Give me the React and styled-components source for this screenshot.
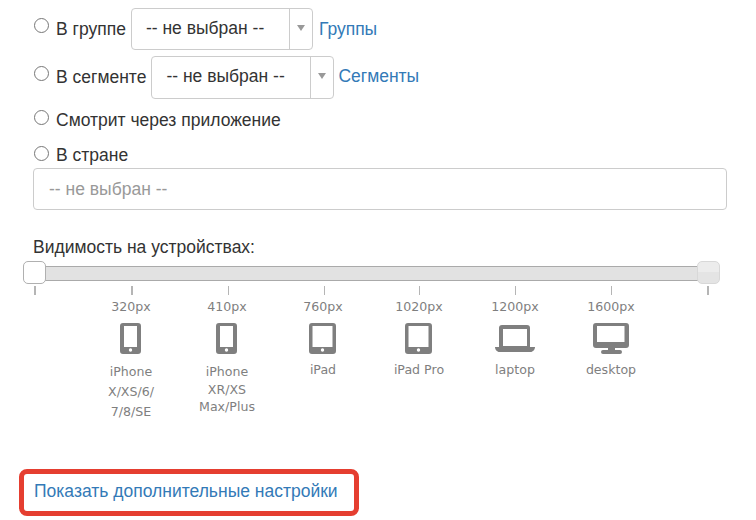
import React from 'react';
import styled, { createGlobalStyle } from 'styled-components';

const devices = [
  { px: '320px', icon: 'phone', slot: 22, lines: ['iPhone', 'X/XS/6/', '7/8/SE'], leading: 20, offset: 8 },
  { px: '410px', icon: 'phone', slot: 22, lines: ['iPhone', 'XR/XS', 'Max/Plus'], leading: 17.5, offset: 9 },
  { px: '760px', icon: 'tablet', slot: 28, lines: ['iPad'], leading: 18, offset: 7 },
  { px: '1020px', icon: 'tablet', slot: 28, lines: ['iPad Pro'], leading: 18, offset: 7 },
  { px: '1200px', icon: 'laptop', slot: 40, lines: ['laptop'], leading: 18, offset: 7 },
  { px: '1600px', icon: 'desktop', slot: 36, lines: ['desktop'], leading: 18, offset: 7 },
];

const ticks = [2, 2, 1, 1, 1, 1, 1, 2];

function DeviceIcon({ type }) {
  if (type === 'phone') {
    return (
      <svg width="21" height="31" viewBox="0 0 21 31">
        <path
          fillRule="evenodd"
          fill="#7f7f7f"
          d="M3 0h15a3 3 0 0 1 3 3v25a3 3 0 0 1-3 3H3a3 3 0 0 1-3-3V3a3 3 0 0 1 3-3zM4 3v21h13V3zM10.5 25.3a1.7 1.7 0 1 0 0 3.4 1.7 1.7 0 0 0 0-3.4z"
        />
      </svg>
    );
  }
  if (type === 'tablet') {
    return (
      <svg width="27" height="31" viewBox="0 0 27 31">
        <path
          fillRule="evenodd"
          fill="#7f7f7f"
          d="M3 0h21a3 3 0 0 1 3 3v25a3 3 0 0 1-3 3H3a3 3 0 0 1-3-3V3a3 3 0 0 1 3-3zM3.500 3v21h20V3zM13.500 25.300a1.700 1.700 0 1 0 0 3.400 1.700 1.700 0 0 0 0-3.400z"
        />
      </svg>
    );
  }
  if (type === 'laptop') {
    return (
      <svg width="40" height="27" viewBox="0 0 40 27">
        <path
          fillRule="evenodd"
          fill="#7f7f7f"
          d="M7 0h25a3 3 0 0 1 3 3v19h5c0 2.500-2 5-4.500 5h-31C2 27 0 24.500 0 22h4V3a3 3 0 0 1 3-3zM8 4v17h24V4z"
        />
      </svg>
    );
  }
  return (
    <svg width="36" height="31" viewBox="0 0 36 31">
      <path
        fillRule="evenodd"
        fill="#7f7f7f"
        d="M3 0h30a3 3 0 0 1 3 3v19a3 3 0 0 1-3 3H22v2h5a2 2 0 0 1 0 4H10a2 2 0 0 1 0-4h5v-2H3a3 3 0 0 1-3-3V3a3 3 0 0 1 3-3zM4 3v16h27.500V3z"
      />
    </svg>
  );
}

function Picker({ width, height }) {
  return (
    <PickerBox $width={width} $height={height}>
      <PickerValue>-- не выбран --</PickerValue>
      <PickerArrow>
        <ArrowShape />
      </PickerArrow>
    </PickerBox>
  );
}

export default function App() {
  return (
    <>
      <GlobalStyle />
      <Page>
        <Row $top={0} $height={42}>
          <Radio type="radio" name="target" $lift={8} />
          <Label>В группе</Label>
          <Picker width={182} height={42} />
          <Link href="#" $gap={6}>Группы</Link>
        </Row>
        <Row $top={6} $height={43}>
          <Radio type="radio" name="target" $lift={8} />
          <Label $lift={2}>В сегменте</Label>
          <Picker width={183} height={43} />
          <Link href="#" $gap={4} $lift={2}>Сегменты</Link>
        </Row>
        <Row $top={9} $height={24}>
          <Radio type="radio" name="target" $lift={5} />
          <Label>Смотрит через приложение</Label>
        </Row>
        <Row $top={11} $height={24}>
          <Radio type="radio" name="target" $lift={3} />
          <Label>В стране</Label>
        </Row>
        <CountryInput placeholder="-- не выбран --" />

        <SliderTitle>Видимость на устройствах:</SliderTitle>
        <Slider>
          <Track />
          <Handle $side="left" />
          <Handle $side="right" />
        </Slider>
        <Ticks>
          {ticks.map((w, i) => (
            <Tick key={i} $width={w} />
          ))}
        </Ticks>
        <DeviceRow>
          {devices.map(d => (
            <Device key={d.px}>
              <DevicePx>{d.px}</DevicePx>
              <IconBox $width={d.slot}>
                <DeviceIcon type={d.icon} />
              </IconBox>
              <DeviceName $leading={d.leading} $offset={d.offset}>
                {d.lines.map(line => (
                  <div key={line}>{line}</div>
                ))}
              </DeviceName>
            </Device>
          ))}
        </DeviceRow>

        <MoreBox>
          <MoreLink href="#">Показать дополнительные настройки</MoreLink>
        </MoreBox>
      </Page>
    </>
  );
}

const GlobalStyle = createGlobalStyle`
  html, body {
    margin: 0;
    background: #fff;
    color: #333;
    font-family: "Liberation Sans", Arial, sans-serif;
    font-size: 17.5px;
  }
`;

const Page = styled.div`
  width: 694px;
  padding: 8px 29px 0 33px;
`;

const Row = styled.div`
  display: flex;
  align-items: center;
  margin-top: ${p => p.$top}px;
  height: ${p => p.$height}px;
`;

const Radio = styled.input`
  width: 15px;
  height: 15px;
  margin: 0 7px ${p => p.$lift}px 1px;
  flex: none;
`;

const Label = styled.span`
  margin-right: 5px;
  margin-bottom: ${p => p.$lift || 0}px;
  line-height: 24px;
  white-space: nowrap;
`;

const Link = styled.a`
  margin-left: ${p => p.$gap}px;
  margin-bottom: ${p => p.$lift || 0}px;
  color: #337ab7;
  text-decoration: none;
`;

const PickerBox = styled.div`
  display: flex;
  flex: none;
  box-sizing: border-box;
  width: ${p => p.$width}px;
  height: ${p => p.$height}px;
  border: 1px solid #ccc;
  border-radius: 4px;
`;

const PickerValue = styled.div`
  flex: 1;
  padding-left: 14px;
  line-height: 38px;
  white-space: nowrap;
`;

const PickerArrow = styled.div`
  flex: none;
  display: flex;
  align-items: center;
  justify-content: center;
  box-sizing: border-box;
  width: 23px;
  padding-bottom: 3px;
  border-left: 1px solid #ccc;
`;

const ArrowShape = styled.div`
  width: 0;
  height: 0;
  border-left: 4px solid transparent;
  border-right: 4px solid transparent;
  border-top: 6px solid #999;
`;

const CountryInput = styled.input`
  display: block;
  box-sizing: border-box;
  width: 694px;
  height: 42px;
  margin-top: 1px;
  padding: 0 15px;
  border: 1px solid #ccc;
  border-radius: 4px;
  font: inherit;
  outline: none;

  &::placeholder {
    color: #999;
    opacity: 1;
  }
`;

const SliderTitle = styled.div`
  margin-top: 26px;
  line-height: 22px;
`;

const Slider = styled.div`
  position: relative;
  width: 675px;
  height: 23px;
  margin: 3px 0 0 1px;
  padding-top: 5px;
  box-sizing: border-box;
`;

const Track = styled.div`
  box-sizing: border-box;
  height: 15px;
  background: #e2e2e2;
  border-top: 1px solid #aaa;
  border-bottom: 1px solid #aaa;
`;

const Handle = styled.div`
  position: absolute;
  top: 0;
  ${p => (p.$side === 'left' ? 'left: -11px;' : 'right: -11px;')}
  box-sizing: border-box;
  width: 23px;
  height: 23px;
  border: 1px solid ${p => (p.$side === 'left' ? '#b0b0b0' : '#d8d8d8')};
  border-radius: 5px;
  background: ${p => (p.$side === 'left' ? '#fff' : 'linear-gradient(#ececec 50%, #e4e4e4 50%)')};
`;

const Ticks = styled.div`
  display: flex;
  justify-content: space-between;
  width: 675px;
  height: 9px;
  margin: 2px 0 0 1px;
`;

const Tick = styled.div`
  width: ${p => p.$width}px;
  height: 9px;
  background: #b5b5b5;
`;

const DeviceRow = styled.div`
  display: flex;
  padding-left: 50px;
  margin-top: 3px;
`;

const Device = styled.div`
  display: flex;
  flex-direction: column;
  align-items: center;
  width: 96px;
  color: #7f7f7f;
  font-family: "DejaVu Sans", Verdana, sans-serif;
  font-size: 12.6px;
`;

const DevicePx = styled.div`
  line-height: 18px;
`;

const IconBox = styled.div`
  display: flex;
  align-items: center;
  width: ${p => p.$width}px;
  height: 31px;
  margin-top: 7px;
`;

const DeviceName = styled.div`
  margin-top: ${p => p.$offset}px;
  line-height: ${p => p.$leading}px;
  text-align: center;
  white-space: nowrap;
`;

const MoreBox = styled.div`
  box-sizing: border-box;
  width: 340px;
  height: 47px;
  margin: 47px 0 0 -14px;
  padding-left: 10px;
  border: 5px solid #e53e30;
  border-radius: 8px;
  line-height: 35px;
`;

const MoreLink = styled.a`
  color: #337ab7;
  text-decoration: none;
  white-space: nowrap;
`;
